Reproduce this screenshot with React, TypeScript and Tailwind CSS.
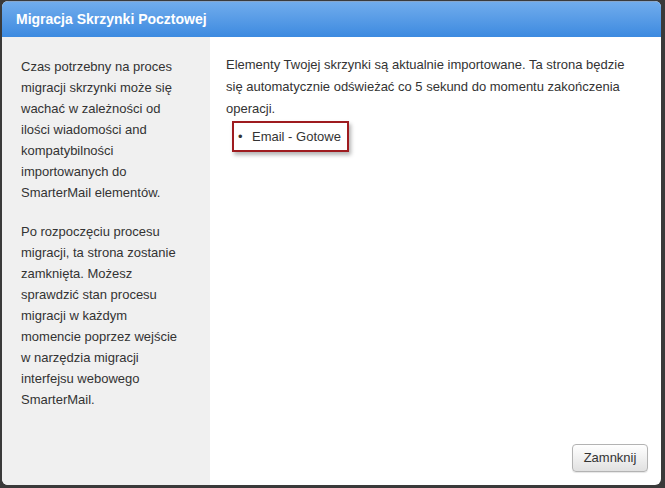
import React from "react"

const sidebarParagraphs = [
  "Czas potrzebny na proces migracji skrzynki może się wachać w zależności od ilości wiadomości and kompatybilności importowanych do SmarterMail elementów.",
  "Po rozpoczęciu procesu migracji, ta strona zostanie zamknięta. Możesz sprawdzić stan procesu migracji w każdym momencie poprzez wejście w narzędzia migracji interfejsu webowego SmarterMail.",
]

export default function App() {
  return (
    <div className="w-[665px] h-[488px] bg-[#3a3a3a] pt-px pl-[2px] pr-[4px] pb-[3px] font-['Liberation_Sans',Arial,sans-serif]">
      <div className="flex flex-col h-full bg-white rounded-[6px] overflow-hidden">
        <header className="flex items-center h-[36px] pl-[14px] border-t border-[#86a6cc] bg-gradient-to-b from-[#70acec] to-[#3c8ae0]">
          <h1 className="font-bold text-[14px] text-white">Migracja Skrzynki Pocztowej</h1>
        </header>
        <div className="flex flex-1">
          <aside className="w-[208px] bg-[#f0f0f0] pl-[19px] pt-[19px] text-[#333] text-[13px] leading-[21px]">
            {sidebarParagraphs.map((text) => (
              <p key={text} className="w-[164px] mb-[18px]">
                {text}
              </p>
            ))}
          </aside>
          <main className="flex flex-col flex-1">
            <div className="flex-1 pl-[16px] pt-[17px] text-[#333] text-[13px]">
              <p className="w-[405px] leading-[22px]">
                Elementy Twojej skrzynki są aktualnie importowane. Ta strona będzie się automatycznie odświeżać co 5 sekund do momentu zakończenia operacji.
              </p>
              <div className="flex items-center w-[117px] h-[31px] ml-[6px] mt-px pl-[4px] border-2 border-[#9e1b1f] shadow-[2px_3px_4px_rgba(0,0,0,0.3)]">
                <span className="w-[14px] text-[13px]">•</span>
                <span>Email - Gotowe</span>
              </div>
            </div>
            <div className="flex justify-end pr-[13px] pb-[13px]">
              <button className="w-[76px] h-[28px] rounded-[4px] border border-[#b3b3b3] bg-gradient-to-b from-white to-[#e1e1e1] text-[#333] text-[13px] shadow-[0_1px_1px_rgba(0,0,0,0.1)]">
                Zamnknij
              </button>
            </div>
          </main>
        </div>
      </div>
    </div>
  )
}
